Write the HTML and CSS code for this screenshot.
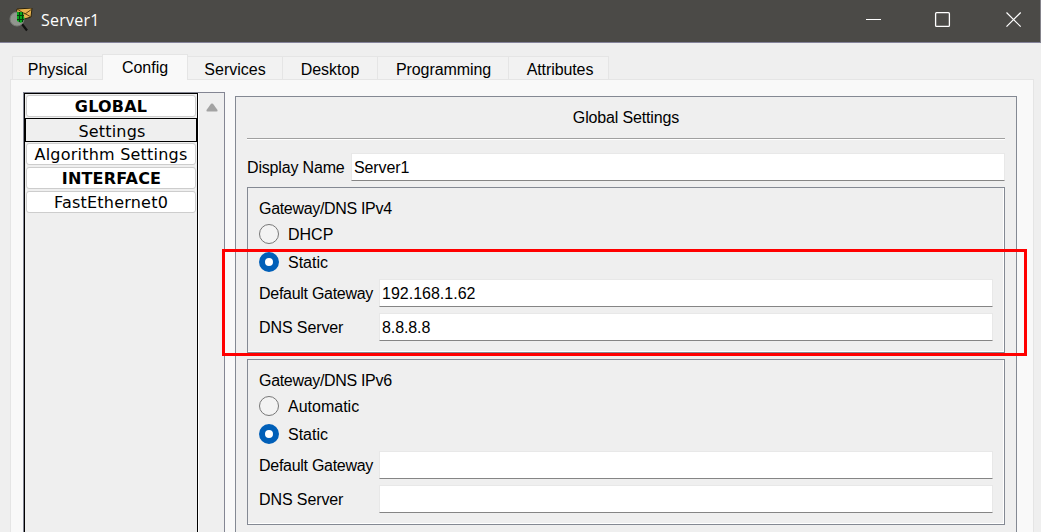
FILE: index.html
```html
<!DOCTYPE html>
<html lang="en">
<head>
<meta charset="utf-8">
<title>Server1</title>
<link rel="stylesheet" href="styles.css">
</head>
<body>
<div class="window">
  <header class="titlebar">
    <svg class="app-icon" width="24" height="24" viewBox="0 0 24 24">
      <path d="M8 1L23 0L22 9L12 12L7 7Z" fill="#e8b34d" stroke="#29220f" stroke-width="1"/>
      <path d="M8 1L16 6L23 1M15 5L22 9" fill="none" stroke="#5d4216" stroke-width="1"/>
      <path d="M13 16L18 22.5" stroke="#111" stroke-width="2.2"/>
      <circle cx="8" cy="11" r="7" fill="#92958f" stroke="#777b75" stroke-width="1"/>
      <path d="M8 4L14 4L15.5 11L12 15L8 13Z" fill="#07a81c"/>
      <path d="M10.5 4V14M13.5 4V14M8 7.5H15M8 11.5H15" stroke="#063d0b" stroke-width="1"/>
    </svg>
    <span class="caption">Server1</span>
    <svg class="controls" width="156" height="16" viewBox="0 0 156 16" fill="none" stroke="#fff">
      <path d="M0 7.5H15"/>
      <rect x="69.6" y=".7" width="13.8" height="13.7" rx="1" stroke-width="1.3"/>
      <path d="M140.5 .5L154.7 14.7M154.7 .5L140.5 14.7" stroke-width="1.2"/>
    </svg>
  </header>
  <nav class="tabs">
    <div class="tab physical">Physical</div>
    <div class="tab config active">Config</div>
    <div class="tab services">Services</div>
    <div class="tab desktop">Desktop</div>
    <div class="tab programming">Programming</div>
    <div class="tab attributes">Attributes</div>
  </nav>
  <main class="pane">
    <aside class="sidebar">
      <div class="list">
        <div class="item heading global">GLOBAL</div>
        <div class="item selected">Settings</div>
        <div class="item wide">Algorithm Settings</div>
        <div class="item heading">INTERFACE</div>
        <div class="item wide">FastEthernet0</div>
      </div>
      <div class="scrollbar"><svg width="12" height="9" viewBox="0 0 12 9"><path d="M5 .8Q6 0 7 .8L11.5 7Q12 8.5 10.5 8.5H1.5Q0 8.5 .5 7Z" fill="#a3a3a3"/></svg></div>
    </aside>
    <section class="settings">
      <h1 class="title">Global Settings</h1>
      <div class="row display"><span class="label">Display Name</span><div class="field name">Server1</div></div>
      <div class="group">
        <div class="legend">Gateway/DNS IPv4</div>
        <div class="option"><span class="radio"></span><span class="choice">DHCP</span></div>
        <div class="option"><span class="radio checked"></span><span class="choice">Static</span></div>
        <div class="row"><span class="label gateway">Default Gateway</span><div class="field">192.168.1.62</div></div>
        <div class="row"><span class="label">DNS Server</span><div class="field name">8.8.8.8</div></div>
      </div>
      <div class="group">
        <div class="legend">Gateway/DNS IPv6</div>
        <div class="option"><span class="radio"></span><span class="choice">Automatic</span></div>
        <div class="option"><span class="radio checked"></span><span class="choice">Static</span></div>
        <div class="row"><span class="label gateway">Default Gateway</span><div class="field"></div></div>
        <div class="row"><span class="label">DNS Server</span><div class="field"></div></div>
      </div>
    </section>
  </main>
  <div class="highlight"></div>
</div>
</body>
</html>
```
FILE: styles.css
```css
* { box-sizing: border-box; }
body { margin: 0; overflow: hidden; }
.window {
  position: relative;
  display: flex;
  flex-direction: column;
  width: 1041px;
  height: 532px;
  overflow: hidden;
  background: #efefef;
  color: #000;
  font: 16px/20px "Liberation Sans", Arial, sans-serif;
}
.titlebar {
  display: flex;
  flex: none;
  height: 43px;
  padding: 8px 18px 0 9px;
  background: #4b4a47;
  border-bottom: 1px solid #84839a;
  border-right: 1px solid #84838a;
  color: #fff;
}
.caption { margin: 1px auto 0 8px; font: 16px/22px "Open Sans", "Noto Sans", sans-serif; letter-spacing: .25px; }
.controls { margin-top: 4px; }
.tabs { display: flex; flex: none; align-items: flex-end; height: 36px; padding-left: 12px; }
.tab {
  height: 24px;
  margin-bottom: -1px;
  padding-top: 3px;
  background: #f2f2f2;
  border: 1px solid #e5e5e5;
  border-left: 0;
  text-align: center;
}
.physical { width: 90px; border-left: 1px solid #e5e5e5; border-right: 0; }
.config { width: 86px; }
.services { width: 95px; }
.desktop { width: 95px; }
.programming { width: 131px; padding-left: 1px; letter-spacing: -.08px; }
.attributes { width: 100px; padding-left: 3px; letter-spacing: -.1px; }
.active {
  z-index: 1;
  height: 26px;
  padding-top: 3px;
  background: #f9f9f9;
  border-left: 1px solid #e5e5e5;
  border-bottom: 0;
}
.pane {
  display: flex;
  flex: 1;
  align-items: flex-start;
  gap: 10px;
  margin: 0 7px 0 10px;
  padding: 12px 16px 0 12px;
  background: #f9f9f9;
  border: 1px solid #e5e5e5;
  border-bottom: 0;
}
.sidebar {
  display: flex;
  flex: none;
  width: 202px;
  height: 450px;
  border: 1px solid #848693;
  background: #efefef;
}
.list {
  display: flex;
  flex-direction: column;
  gap: 2px;
  width: 174px;
  padding-top: 1px;
  border: 1px solid #000;
  font: 16px/20px "DejaVu Sans", Verdana, sans-serif;
}
.item {
  height: 22px;
  margin: 0 1px;
  padding-top: 1px;
  background: #fff;
  border: 1px solid #cdcdcd;
  border-radius: 3px;
  text-align: center;
  white-space: nowrap;
}
.heading { font-weight: bold; letter-spacing: .2px; }
.heading:not(.global) { padding-left: 1px; }
.wide { letter-spacing: .22px; }
.item.selected {
  height: 24px;
  margin: -1px 0;
  padding: 3px 0 0 2px;
  background: #efefef;
  border-color: #000;
  border-radius: 0;
  letter-spacing: .2px;
}
.scrollbar { display: flex; flex: 1; justify-content: center; padding: 10px 0 0; border-left: 1px solid #fff; }
.settings {
  flex: 1;
  height: 450px;
  margin-top: 4px;
  padding: 0 11px;
  border: 1px solid #848993;
  background: #efefef;
}
.title {
  height: 42px;
  margin: 0;
  padding-top: 11px;
  border-bottom: 1px solid #a0a0a0;
  box-shadow: 0 1px #fff;
  font: inherit;
  letter-spacing: -.15px;
  text-align: center;
}
.row { display: flex; align-items: center; height: 28px; }
.label { flex: none; width: 120px; padding-top: 2px; letter-spacing: -.1px; white-space: nowrap; }
.gateway { letter-spacing: -.28px; }
.display { margin-top: 14px; }
.display .label { width: 104px; letter-spacing: -.17px; }
.field {
  flex: 1;
  height: 28px;
  padding: 4px 2px;
  background: #fff;
  border: 1px solid #e8e8e8;
  border-bottom-color: #858585;
}
.name { letter-spacing: -.1px; }
.group {
  height: 166px;
  margin: 6px 0;
  padding: 11px 11px 0;
  border: 1px solid #848993;
  box-shadow: inset -1px -1px #fff;
}
.legend { height: 19px; letter-spacing: -.32px; }
.option { display: flex; align-items: center; gap: 9px; height: 20px; margin-top: 6px; }
.choice { padding-top: 2px; }
.option + .option { margin-top: 8px; }
.option + .row { margin-top: 7px; }
.row + .row { margin-top: 6px; }
.radio { width: 20px; height: 20px; border: 1px solid #777; border-radius: 50%; background: #f3f3f3; }
.radio.checked { border: 6px solid #005fb8; background: #fff; }
.highlight {
  position: absolute;
  left: 222px;
  top: 249px;
  width: 805px;
  height: 107px;
  border: 3px solid #f00;
}
```
